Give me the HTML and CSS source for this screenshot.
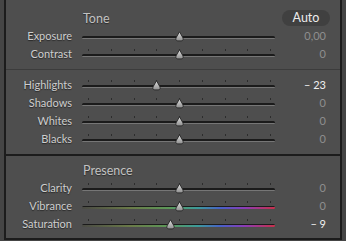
FILE: index.html
```html
<!DOCTYPE html>
<html lang="en">

<head>
    <meta charset="UTF-8">
    <title>Basic - Tone</title>
    <link rel="stylesheet" href="styles.css">
</head>

<body>

    <div class="panel">
        <div class="section tone">
            <div class="head">
                <span class="title">Tone</span>
                <button class="auto">Auto</button>
            </div>
            <div class="row">
                <span class="label">Exposure</span>
                <div class="slider">
                    <div class="track"></div>
                    <svg class="thumb" style="left: 50%;" width="11" height="11" viewBox="0 0 11 11"><use href="#knob"/></svg>
                </div>
                <span class="value">0,00</span>
            </div>
            <div class="row">
                <span class="label">Contrast</span>
                <div class="slider">
                    <div class="ticks"><i></i><i></i><i></i><i></i><i></i><i></i><i></i><i></i><i></i></div>
                    <div class="track"></div>
                    <svg class="thumb" style="left: 50%;" width="11" height="11" viewBox="0 0 11 11"><use href="#knob"/></svg>
                </div>
                <span class="value">0</span>
            </div>

            <div class="divider"></div>

            <div class="row">
                <span class="label">Highlights</span>
                <div class="slider">
                    <div class="ticks"><i></i><i></i><i></i><i></i><i></i><i></i><i></i><i></i><i></i></div>
                    <div class="track"></div>
                    <svg class="thumb" style="left: 38.5%;" width="11" height="11" viewBox="0 0 11 11"><use href="#knob"/></svg>
                </div>
                <span class="value changed">&ndash; 23</span>
            </div>
            <div class="row">
                <span class="label">Shadows</span>
                <div class="slider">
                    <div class="ticks"><i></i><i></i><i></i><i></i><i></i><i></i><i></i><i></i><i></i></div>
                    <div class="track"></div>
                    <svg class="thumb" style="left: 50%;" width="11" height="11" viewBox="0 0 11 11"><use href="#knob"/></svg>
                </div>
                <span class="value">0</span>
            </div>
            <div class="row">
                <span class="label">Whites</span>
                <div class="slider">
                    <div class="ticks"><i></i><i></i><i></i><i></i><i></i><i></i><i></i><i></i><i></i></div>
                    <div class="track"></div>
                    <svg class="thumb" style="left: 50%;" width="11" height="11" viewBox="0 0 11 11"><use href="#knob"/></svg>
                </div>
                <span class="value">0</span>
            </div>
            <div class="row">
                <span class="label">Blacks</span>
                <div class="slider">
                    <div class="ticks"><i></i><i></i><i></i><i></i><i></i><i></i><i></i><i></i><i></i></div>
                    <div class="track"></div>
                    <svg class="thumb" style="left: 50%;" width="11" height="11" viewBox="0 0 11 11"><use href="#knob"/></svg>
                </div>
                <span class="value">0</span>
            </div>
        </div>

        <div class="section presence">
            <div class="head">
                <span class="title">Presence</span>
            </div>
            <div class="row">
                <span class="label">Clarity</span>
                <div class="slider">
                    <div class="ticks"><i></i><i></i><i></i><i></i><i></i><i></i><i></i><i></i><i></i></div>
                    <div class="track"></div>
                    <svg class="thumb" style="left: 50%;" width="11" height="11" viewBox="0 0 11 11"><use href="#knob"/></svg>
                </div>
                <span class="value">0</span>
            </div>
            <div class="row">
                <span class="label">Vibrance</span>
                <div class="slider">
                    <div class="ticks"><i></i><i></i><i></i><i></i><i></i><i></i><i></i><i></i><i></i></div>
                    <div class="track color"></div>
                    <svg class="thumb" style="left: 50%;" width="11" height="11" viewBox="0 0 11 11"><use href="#knob"/></svg>
                </div>
                <span class="value">0</span>
            </div>
            <div class="row">
                <span class="label">Saturation</span>
                <div class="slider">
                    <div class="ticks"><i></i><i></i><i></i><i></i><i></i><i></i><i></i><i></i><i></i></div>
                    <div class="track color"></div>
                    <svg class="thumb" style="left: 45.5%;" width="11" height="11" viewBox="0 0 11 11"><use href="#knob"/></svg>
                </div>
                <span class="value changed">&ndash; 9</span>
            </div>
        </div>
    </div>

    <!-- shared slider knob -->
    <svg width="0" height="0" style="position: absolute;">
        <defs>
            <linearGradient id="knobFill" x1="0" y1="0" x2="0" y2="1">
                <stop offset="0" stop-color="#e2e2e2"/>
                <stop offset="1" stop-color="#8e8e8e"/>
            </linearGradient>
            <path id="knob" d="M5.5 0.8 L8.6 6.2 Q10.2 9.6 7.2 9.9 L3.8 9.9 Q0.8 9.6 2.4 6.2 Z" fill="url(#knobFill)" stroke="#262626" stroke-width="0.9"/>
        </defs>
    </svg>

</body>

</html>
```

FILE: styles.css
```css
body {
    margin: 0;
    padding: 0 4px;
    background-color: #454545;
    font-family: 'Lato', 'Noto Sans', sans-serif;
    font-size: 11px;
    color: #cecece;
}

.panel {
    background-color: #4e4e4e;
    border-left: 2px solid #1c1c1c;
    border-right: 2px solid #1c1c1c;
    border-bottom: 2px solid #1c1c1c;
    height: 240px;
    box-sizing: border-box;
}

.section {
    display: flex;
    flex-direction: column;
}

.tone {
    padding: 9px 0 6px;
    border-bottom: 2px solid #1c1c1c;
}

.presence {
    padding: 5px 0 5px;
}

.head {
    display: flex;
    align-items: center;
    height: 18px;
    padding-left: 77px;
}

.title {
    font-size: 12.5px;
    color: #c2c2c2;
    text-shadow: 0 1px 1px rgba(0, 0, 0, 0.45);
}

.auto {
    margin-left: auto;
    margin-right: 10px;
    width: 48px;
    height: 16px;
    padding: 0;
    border: none;
    border-radius: 8px;
    background-color: #404040;
    color: #ececec;
    font-family: inherit;
    font-size: 12.5px;
    line-height: 16px;
}

.row {
    display: grid;
    grid-template-columns: 66px 193px 41px;
    column-gap: 10px;
    height: 18px;
    line-height: 18px;
}

.label {
    text-align: right;
    text-shadow: 0 1px 1px rgba(0, 0, 0, 0.5);
}

.value {
    text-align: right;
    color: #8e8e8e;
}

.value.changed {
    color: #f0f0f0;
}

.divider {
    height: 1px;
    margin: 6px 0;
    background-color: #3c3c3c;
}

.slider {
    position: relative;
}

.ticks {
    display: flex;
    justify-content: space-between;
    padding: 0 4px 0 6px;
    margin-top: 4px;
    height: 2px;
}

.ticks i {
    width: 1px;
    height: 2px;
    background-color: #2c2c2c;
}

.track {
    position: absolute;
    left: 0;
    right: 0;
    top: 9px;
    height: 3px;
    border-radius: 2px;
    background: linear-gradient(#1b1b1b 0 2px, #767676 2px);
}

.track.color {
    background:
        linear-gradient(#1b1b1b 0 1px, transparent 1px),
        linear-gradient(to right, #4a4a44 0%, #6a7a48 25%, #5c9858 45%, #3c9a9a 60%, #4860c8 72%, #8a3cb8 84%, #c8304a 100%);
}

.thumb {
    position: absolute;
    top: 4px;
    margin-left: -5px;
}
```
